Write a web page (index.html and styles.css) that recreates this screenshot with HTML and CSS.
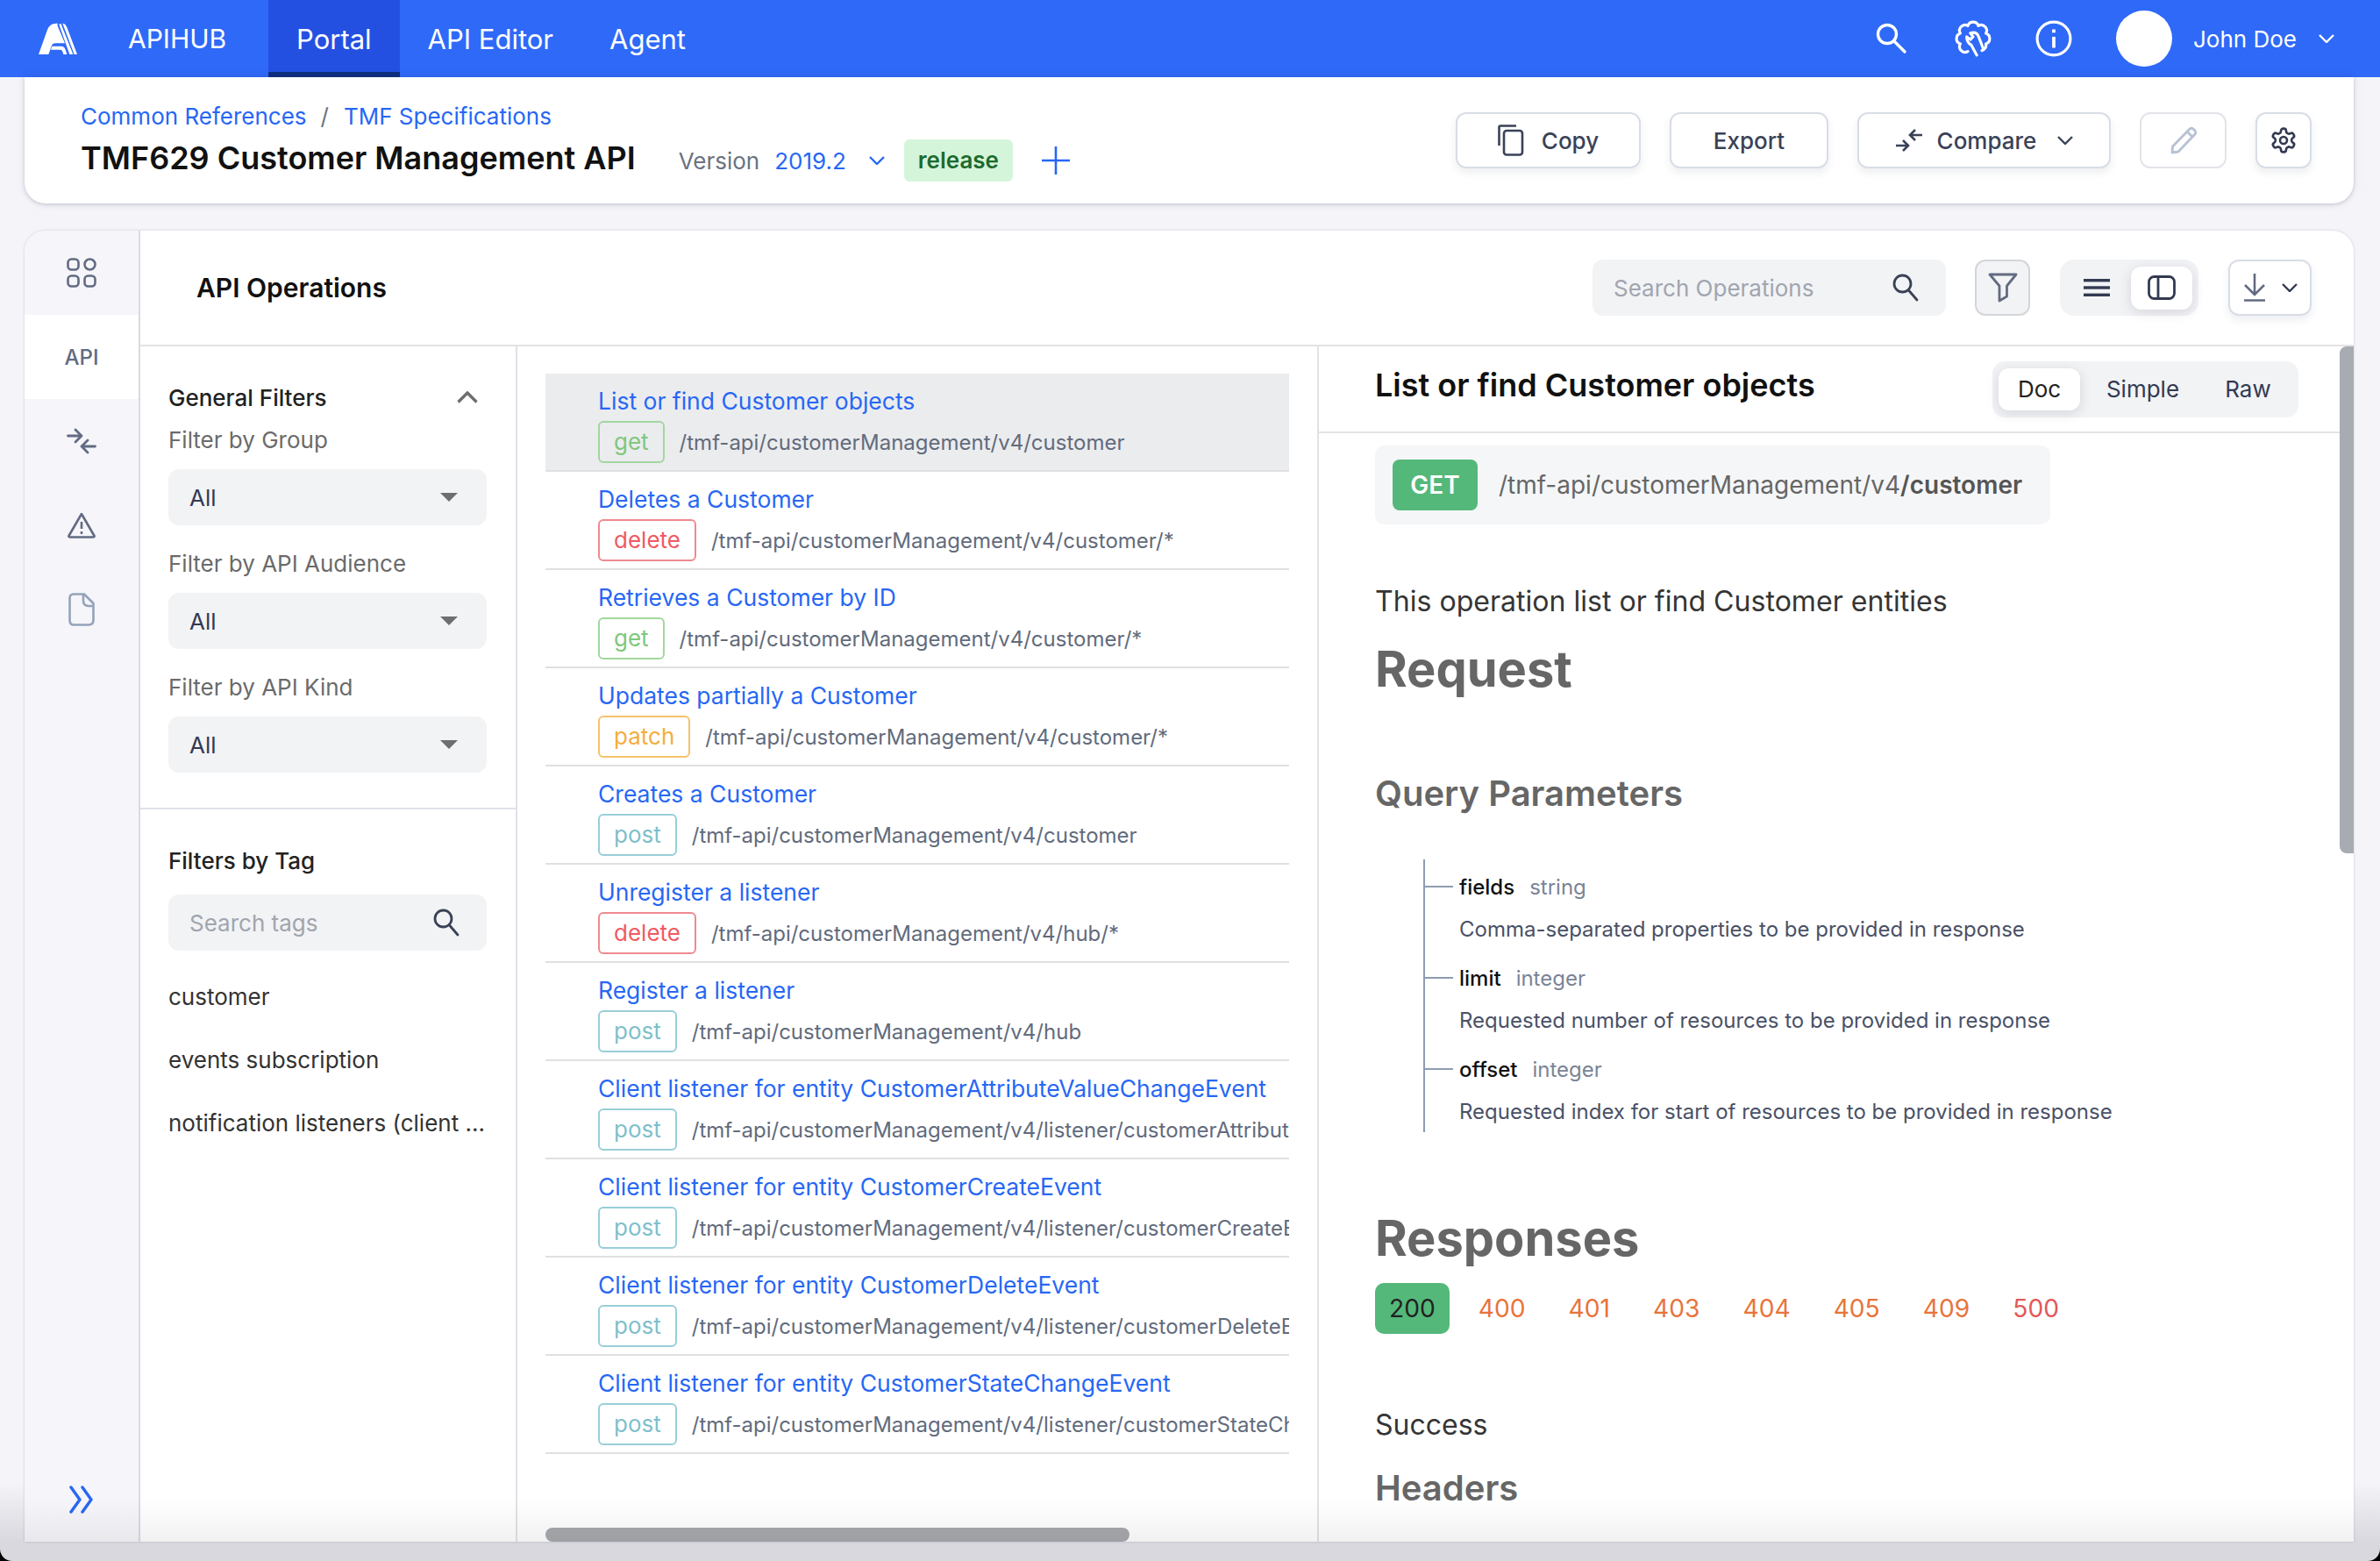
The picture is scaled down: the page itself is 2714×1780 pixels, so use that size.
FILE: index.html
```html
<!DOCTYPE html>
<html lang="en">
<head>
  <meta charset="UTF-8">
  <title>APIHUB Portal</title>
  <link rel="stylesheet" href="styles.css">
</head>
<body>
  <div class="window">
    <!-- Top navigation -->
    <header class="topnav">
      <svg class="logo" viewBox="0 0 132 108" fill="#fff">
        <path d="M0 108 L30 24 Q38 2 60 2 L66 2 L64 8 L90 70 L58 70 Q48 70 44 80 L34 108 Z"/>
        <path d="M46 80 H78 Q88 80 92 92 L97 108 H85 L82 98 Q80 92 74 92 H42 Z"/>
        <path d="M70 6 L76 2 L118 108 H106 Z"/>
        <path d="M82 2 Q92 2 98 18 L132 108 H122 Z"/>
      </svg>
      <span class="brand">APIHUB</span>
      <nav class="tabs">
        <a class="tab active">Portal</a>
        <a class="tab">API Editor</a>
        <a class="tab">Agent</a>
      </nav>
      <div class="nav-right">
        <svg class="nav-search" viewBox="0 0 36 36" fill="none" stroke="#fff" stroke-width="3.4" stroke-linecap="round"><circle cx="13" cy="13" r="10.5"/><path d="M21 21 L33 33"/></svg>
        <svg class="nav-tool" viewBox="0 0 40 40" fill="none" stroke="#fff" stroke-width="3" stroke-linecap="round" stroke-linejoin="round"><path d="M14.3 33.9 A6 6 0 0 1 6.1 25.7 A6 6 0 0 1 6.1 14.3 A6 6 0 0 1 14.3 6.1 A6 6 0 0 1 25.7 6.1 A6 6 0 0 1 33.9 14.3 A6 6 0 0 1 33.9 25.700 A6 6 0 0 1 29.500 33"/><path d="M24 38 L18 27 Q13 24 13 18 L17 21 L20 18 L17 14 Q24 12 26 18 L31 31"/></svg>
        <svg class="nav-info" viewBox="0 0 40 40" fill="none" stroke="#fff" stroke-width="3"><circle cx="20" cy="20" r="18"/><path d="M20 18 V30" stroke-width="3.6"/><path d="M20 10 V13.6" stroke-width="3.6"/></svg>
        <span class="avatar"></span>
        <span class="user">John Doe</span>
        <svg class="nav-chevron" viewBox="0 0 18 10" fill="none" stroke="#fff" stroke-width="2.4"><path d="M1 1 L9 9 L17 1"/></svg>
      </div>
    </header>

    <!-- Package header -->
    <section class="package">
      <div class="package-info">
        <div class="crumbs"><a>Common References</a><span class="sep">/</span><a>TMF Specifications</a></div>
        <div class="title-row">
          <h1>TMF629 Customer Management API</h1>
          <span class="version-label">Version</span>
          <span class="version">2019.2</span>
          <svg class="version-chevron" viewBox="0 0 18 10" fill="none" stroke="#2767f4" stroke-width="2.4"><path d="M1 1 L9 9 L17 1"/></svg>
          <span class="release">release</span>
          <svg class="plus" viewBox="0 0 34 34" fill="none" stroke="#2767f4" stroke-width="2.6"><path d="M17 1 V33 M1 17 H33"/></svg>
        </div>
      </div>
      <div class="actions">
        <button class="btn btn-copy">
          <svg width="30" height="36" viewBox="0 0 30 36" fill="none" stroke="#3a4257" stroke-width="2.6"><path d="M1.5 24 V3 Q1.5 1.5 3 1.5 H21"/><rect x="7" y="7" width="21" height="27.5" rx="3"/></svg>
          Copy
        </button>
        <button class="btn btn-export">Export</button>
        <button class="btn btn-compare">
          <svg width="32" height="28" viewBox="0 0 32 28" fill="none" stroke="#3a4257" stroke-width="2.6"><path d="M1 20 H14 M9 14 L15 20 L9 26"/><path d="M31 8 H18 M23 2 L17 8 L23 14"/></svg>
          Compare
          <svg class="btn-chevron" width="18" height="10" viewBox="0 0 18 10" fill="none" stroke="#3a4257" stroke-width="2.4"><path d="M1 1 L9 9 L17 1"/></svg>
        </button>
        <button class="btn btn-edit">
          <svg width="32" height="32" viewBox="0 0 32 32" fill="none" stroke="#b7c1d3" stroke-width="2.8" stroke-linejoin="round"><path d="M23 3 Q25 1.5 27 3 L29 5 Q30.500 7 29 9 L10 29 L3 30 L3.500 23 Z"/><path d="M20 6 L26 12"/></svg>
        </button>
        <button class="btn btn-settings">
          <svg width="32" height="32" viewBox="0 0 24 24" fill="none" stroke="#333a52" stroke-width="2"><path d="M12.22 2h-.44a2 2 0 0 0-2 2v.18a2 2 0 0 1-1 1.73l-.43.25a2 2 0 0 1-2 0l-.15-.08a2 2 0 0 0-2.73.73l-.22.38a2 2 0 0 0 .73 2.730l.15.1a2 2 0 0 1 1 1.72v.51a2 2 0 0 1-1 1.74l-.15.09a2 2 0 0 0-.73 2.73l.22.38a2 2 0 0 0 2.73.73l.15-.08a2 2 0 0 1 2 0l.43.25a2 2 0 0 1 1 1.73V20a2 2 0 0 0 2 2h.44a2 2 0 0 0 2-2v-.18a2 2 0 0 1 1-1.73l.43-.25a2 2 0 0 1 2 0l.15.08a2 2 0 0 0 2.73-.73l.22-.39a2 2 0 0 0-.73-2.73l-.15-.08a2 2 0 0 1-1-1.74v-.5a2 2 0 0 1 1-1.74l.15-.09a2 2 0 0 0 .73-2.73l-.22-.38a2 2 0 0 0-2.73-.73l-.15.08a2 2 0 0 1-2 0l-.43-.25a2 2 0 0 1-1-1.73V4a2 2 0 0 0-2-2z"/><circle cx="12" cy="12" r="3"/></svg>
        </button>
      </div>
    </section>

    <!-- Main panel -->
    <section class="panel">
      <aside class="sidebar">
        <div class="side-item">
          <svg width="34" height="34" viewBox="0 0 34 34" fill="none" stroke="#626b82" stroke-width="2.600"><rect x="1.500" y="1.500" width="12" height="12" rx="4"/><rect x="20.500" y="1.500" width="12" height="12" rx="6"/><rect x="1.500" y="20.500" width="12" height="12" rx="4"/><rect x="20.500" y="20.500" width="12" height="12" rx="4"/></svg>
        </div>
        <div class="side-item side-active">API</div>
        <div class="side-item">
          <svg width="34" height="30" viewBox="0 0 34 30" fill="none" stroke="#626b82" stroke-width="2.800" stroke-linecap="round" stroke-linejoin="round"><path d="M1.500 9 H17 M10 2 L17 9 L10 16"/><path d="M32.500 21 H17 M24 14 L17 21 L24 28"/></svg>
        </div>
        <div class="side-item">
          <svg width="32" height="30" viewBox="0 0 32 30" fill="none" stroke="#626b82" stroke-width="2.600" stroke-linejoin="round"><path d="M16 2 L30.500 27 Q31 28.500 29 28.500 H3 Q1 28.500 1.500 27 Z"/><path d="M16 11 V19 M16 22 V25"/></svg>
        </div>
        <div class="side-item">
          <svg width="30" height="38" viewBox="0 0 30 38" fill="none" stroke="#94a2ba" stroke-width="2.600" stroke-linejoin="round"><path d="M6 1.500 H18 L28.500 12 V31 Q28.500 36.500 23 36.500 H6 Q1.500 36.500 1.500 31 V6 Q1.500 1.500 6 1.500 Z"/><path d="M17 1.500 V9 Q17 15 23 15 H28.500"/></svg>
        </div>
        <div class="side-bottom">
          <svg width="30" height="32" viewBox="0 0 30 32" fill="none" stroke="#2767f4" stroke-width="3.400" stroke-linecap="round" stroke-linejoin="round"><path d="M3 2 L13 16 L3 30"/><path d="M16 2 L26 16 L16 30"/></svg>
        </div>
      </aside>

      <div class="content">
        <div class="toolbar">
          <h2 class="toolbar-title">API Operations</h2>
          <div class="search-box search-ops">
            <span class="placeholder">Search Operations</span>
            <svg width="30" height="32" viewBox="0 0 30 32" fill="none" stroke="#3a4257" stroke-width="2.800" stroke-linecap="round"><circle cx="11.500" cy="11.500" r="9.500"/><path d="M18.500 19 L28 30"/></svg>
          </div>
          <button class="btn btn-filter">
            <svg width="34" height="34" viewBox="0 0 34 34" fill="none" stroke="#626b82" stroke-width="2.800" stroke-linejoin="round"><path d="M2 2 H32 L21.500 15 V27 L13 32 V15 Z"/></svg>
          </button>
          <div class="view-toggle">
            <span class="view-opt">
              <svg width="30" height="20" viewBox="0 0 30 20" fill="#333a52"><rect y="0" width="30" height="3.400"/><rect y="8.300" width="30" height="3.400"/><rect y="16.600" width="30" height="3.400"/></svg>
            </span>
            <span class="view-opt view-active">
              <svg width="32" height="28" viewBox="0 0 32 28" fill="none" stroke="#333a52" stroke-width="2.800"><rect x="1.500" y="1.500" width="29" height="25" rx="6"/><path d="M12 1.500 V26.500"/></svg>
            </span>
          </div>
          <button class="btn btn-download">
            <svg width="26" height="32" viewBox="0 0 26 32" fill="none" stroke="#626b82" stroke-width="2.600"><path d="M13 0 V23 M2 13 L13 24 L24 13"/><path d="M1 30.500 H25"/></svg>
            <svg width="18" height="10" viewBox="0 0 18 10" fill="none" stroke="#333a52" stroke-width="2.400"><path d="M1 1 L9 9 L17 1"/></svg>
          </button>
        </div>

        <div class="columns">
          <!-- Filters -->
          <div class="filters">
            <div class="filters-general">
              <div class="filter-head">
                <span>General Filters</span>
                <svg width="24" height="14" viewBox="0 0 24 14" fill="none" stroke="#6e6e6e" stroke-width="3.400"><path d="M1.500 12.500 L12 2 L22.500 12.500"/></svg>
              </div>
              <div class="filter-label">Filter by Group</div>
              <div class="select">All<i class="caret"></i></div>
              <div class="filter-label">Filter by API Audience</div>
              <div class="select">All<i class="caret"></i></div>
              <div class="filter-label">Filter by API Kind</div>
              <div class="select">All<i class="caret"></i></div>
            </div>
            <div class="filters-tags">
              <div class="tags-title">Filters by Tag</div>
              <div class="search-box search-tags">
                <span class="placeholder">Search tags</span>
                <svg width="30" height="32" viewBox="0 0 30 32" fill="none" stroke="#3a4257" stroke-width="2.800" stroke-linecap="round"><circle cx="11.500" cy="11.500" r="9.500"/><path d="M18.500 19 L28 30"/></svg>
              </div>
              <div class="tag">customer</div>
              <div class="tag">events subscription</div>
              <div class="tag">notification listeners (client ...</div>
            </div>
          </div>

          <!-- Operations list -->
          <div class="ops">
            <div class="op selected">
              <div class="op-title">List or find Customer objects</div>
              <div class="op-line"><span class="method get">get</span><span class="op-path">/tmf-api/customerManagement/v4/customer</span></div>
            </div>
            <div class="op">
              <div class="op-title">Deletes a Customer</div>
              <div class="op-line"><span class="method delete">delete</span><span class="op-path">/tmf-api/customerManagement/v4/customer/*</span></div>
            </div>
            <div class="op">
              <div class="op-title">Retrieves a Customer by ID</div>
              <div class="op-line"><span class="method get">get</span><span class="op-path">/tmf-api/customerManagement/v4/customer/*</span></div>
            </div>
            <div class="op">
              <div class="op-title">Updates partially a Customer</div>
              <div class="op-line"><span class="method patch">patch</span><span class="op-path">/tmf-api/customerManagement/v4/customer/*</span></div>
            </div>
            <div class="op">
              <div class="op-title">Creates a Customer</div>
              <div class="op-line"><span class="method post">post</span><span class="op-path">/tmf-api/customerManagement/v4/customer</span></div>
            </div>
            <div class="op">
              <div class="op-title">Unregister a listener</div>
              <div class="op-line"><span class="method delete">delete</span><span class="op-path">/tmf-api/customerManagement/v4/hub/*</span></div>
            </div>
            <div class="op">
              <div class="op-title">Register a listener</div>
              <div class="op-line"><span class="method post">post</span><span class="op-path">/tmf-api/customerManagement/v4/hub</span></div>
            </div>
            <div class="op">
              <div class="op-title">Client listener for entity CustomerAttributeValueChangeEvent</div>
              <div class="op-line"><span class="method post">post</span><span class="op-path">/tmf-api/customerManagement/v4/listener/customerAttributeValueChangeEvent</span></div>
            </div>
            <div class="op">
              <div class="op-title">Client listener for entity CustomerCreateEvent</div>
              <div class="op-line"><span class="method post">post</span><span class="op-path">/tmf-api/customerManagement/v4/listener/customerCreateEvent</span></div>
            </div>
            <div class="op">
              <div class="op-title">Client listener for entity CustomerDeleteEvent</div>
              <div class="op-line"><span class="method post">post</span><span class="op-path">/tmf-api/customerManagement/v4/listener/customerDeleteEvent</span></div>
            </div>
            <div class="op">
              <div class="op-title">Client listener for entity CustomerStateChangeEvent</div>
              <div class="op-line"><span class="method post">post</span><span class="op-path">/tmf-api/customerManagement/v4/listener/customerStateChangeEvent</span></div>
            </div>
            <div class="hscroll"></div>
          </div>

          <!-- Operation details -->
          <div class="detail">
            <div class="detail-head">
              <h2>List or find Customer objects</h2>
              <div class="mode-toggle">
                <span class="mode mode-active">Doc</span>
                <span class="mode mode-simple">Simple</span>
                <span class="mode mode-raw">Raw</span>
              </div>
            </div>
            <div class="detail-body">
              <div class="endpoint">
                <span class="endpoint-method">GET</span>
                <span class="endpoint-path">/tmf-api/customerManagement/v4<b>/customer</b></span>
              </div>
              <p class="desc">This operation list or find Customer entities</p>
              <h3 class="h-large">Request</h3>
              <h4 class="h-query">Query Parameters</h4>
              <div class="params">
                <div class="param">
                  <div class="param-name"><i class="tick"></i><span>fields</span><em>string</em></div>
                  <div class="param-desc">Comma-separated properties to be provided in response</div>
                </div>
                <div class="param">
                  <div class="param-name"><i class="tick"></i><span>limit</span><em>integer</em></div>
                  <div class="param-desc">Requested number of resources to be provided in response</div>
                </div>
                <div class="param">
                  <div class="param-name"><i class="tick"></i><span>offset</span><em>integer</em></div>
                  <div class="param-desc">Requested index for start of resources to be provided in response</div>
                </div>
              </div>
              <h3 class="h-large h-responses">Responses</h3>
              <div class="codes">
                <span class="code code-active">200</span>
                <span class="code">400</span>
                <span class="code">401</span>
                <span class="code">403</span>
                <span class="code">404</span>
                <span class="code">405</span>
                <span class="code">409</span>
                <span class="code code-500">500</span>
              </div>
              <p class="success">Success</p>
              <h4 class="h-headers">Headers</h4>
            </div>
            <div class="vscroll"></div>
          </div>
        </div>
      </div>
      <div class="panel-fade"></div>
    </section>
  </div>
</body>
</html>
```

FILE: styles.css
```css
* {
  box-sizing: border-box;
}

body {
  margin: 0;
  background-color: #000;
  font-family: 'Inter', 'Liberation Sans', sans-serif;
  color: #333a52;
}

h1, h2, h3, h4, p {
  margin: 0;
}

.window {
  width: 2714px;
  height: 1780px;
  display: flex;
  flex-direction: column;
  overflow: hidden;
  border-radius: 0 0 14px 14px;
  background: linear-gradient(to bottom, #f4f4f9 0, #f4f4f9 1690px, #d8d8de 1758px);
}

/* Top navigation */
.topnav {
  height: 88px;
  flex: none;
  display: flex;
  align-items: center;
  padding-left: 44px;
  background-color: #2f69f8;
  color: #fff;
  font-size: 30px;
}

.logo {
  width: 44px;
  height: 36px;
}

.brand {
  margin-left: 58px;
  width: 160px;
}

.tabs {
  display: flex;
  align-self: stretch;
  font-size: 31px;
}

.tab {
  display: flex;
  align-items: center;
  padding: 0 32px;
  border-bottom: 6px solid transparent;
  border-top: 6px solid transparent;
}

.tab.active {
  background-color: #2450e2;
  border-top-color: #2450e2;
  border-bottom-color: #0f2d7e;
}

.nav-right {
  margin-left: auto;
  display: flex;
  align-items: center;
  padding-right: 52px;
}

.nav-search {
  width: 36px;
  height: 36px;
}

.nav-tool {
  width: 42px;
  height: 42px;
  margin-left: 54px;
}

.nav-info {
  width: 42px;
  height: 42px;
  margin-left: 50px;
}

.avatar {
  width: 64px;
  height: 64px;
  margin-left: 50px;
  border-radius: 50%;
  background-color: #fff;
}

.user {
  margin-left: 24px;
  font-size: 26px;
}

.nav-chevron {
  width: 18px;
  height: 10px;
  margin-left: 25px;
}

/* Package header */
.package {
  height: 144px;
  flex: none;
  margin: 0 30px 0 28px;
  padding: 0 48px 0 64px;
  display: flex;
  justify-content: space-between;
  background-color: #fff;
  border-radius: 0 0 24px 24px;
  box-shadow: 0 1px 4px rgba(60, 65, 90, 0.25), 0 0 14px rgba(60, 65, 90, 0.06);
}

.package-info {
  padding-top: 30px;
}

.crumbs {
  height: 32px;
  line-height: 30px;
  font-size: 26px;
  color: #2767f4;
}

.crumbs .sep {
  margin: 0 17px 0 16px;
  color: #6b7280;
}

.title-row {
  display: flex;
  align-items: center;
  height: 48px;
  margin-top: 6px;
}

.title-row h1 {
  font-size: 36px;
  font-weight: 600;
  color: #111;
  margin-right: 49px;
}

.version-label {
  font-size: 26px;
  color: #6b7280;
  padding-top: 6px;
}

.version {
  margin-left: 17px;
  font-size: 26px;
  color: #2767f4;
  padding-top: 6px;
}

.version-chevron {
  width: 18px;
  height: 10px;
  margin: 6px 0 0 26px;
}

.release {
  margin-left: 22px;
  height: 48px;
  padding: 0 16px;
  line-height: 48px;
  font-size: 26px;
  font-weight: 600;
  color: #1c6a2e;
  background-color: #d5f5da;
  border-radius: 6px;
  margin-top: 6px;
}

.plus {
  width: 34px;
  height: 34px;
  margin: 6px 0 0 32px;
}

.actions {
  display: flex;
  gap: 33px;
  padding-top: 40px;
}

.btn {
  height: 64px;
  display: flex;
  align-items: center;
  justify-content: center;
  font-family: inherit;
  font-size: 26px;
  font-weight: 500;
  color: #3a4257;
  background-color: #fff;
  border: 2px solid #d8dde6;
  border-radius: 12px;
  box-shadow: 0 5px 10px rgba(60, 65, 90, 0.09);
}

.btn-copy {
  width: 211px;
  gap: 20px;
}

.btn-export {
  width: 181px;
}

.btn-compare {
  width: 289px;
  gap: 16px;
}

.btn-chevron {
  margin-left: 8px;
}

.btn-edit {
  width: 99px;
  border-color: #e2e4e8;
  box-shadow: none;
}

.btn-settings {
  width: 64px;
}

/* Main panel */
.panel {
  position: relative;
  flex: none;
  height: 1495px;
  margin: 31px 30px 0 28px;
  display: flex;
  overflow: hidden;
  background-color: #fff;
  border-radius: 24px 24px 0 0;
  box-shadow: 0 0 3px rgba(60, 65, 90, 0.22);
}

.panel-fade {
  position: absolute;
  left: 0;
  right: 0;
  bottom: 0;
  height: 50px;
  background: linear-gradient(to bottom, rgba(0, 0, 0, 0), rgba(0, 0, 0, 0.055));
  pointer-events: none;
}

.sidebar {
  position: relative;
  width: 132px;
  flex: none;
  display: flex;
  flex-direction: column;
  background-color: #f5f5fa;
  border-right: 2px solid #d8dbe3;
}

.side-item {
  height: 96px;
  display: flex;
  align-items: center;
  justify-content: center;
  font-size: 24px;
  font-weight: 500;
  color: #626b82;
}

.side-active {
  background-color: #fff;
}

.side-bottom {
  margin-top: auto;
  height: 96px;
  display: flex;
  align-items: center;
  justify-content: center;
}

.content {
  flex: 1;
  min-width: 0;
  display: flex;
  flex-direction: column;
}

.toolbar {
  height: 132px;
  flex: none;
  display: flex;
  align-items: flex-start;
  padding: 33px 48px 0 64px;
  border-bottom: 2px solid #e3e3e5;
}

.toolbar-title {
  font-size: 30px;
  font-weight: 600;
  line-height: 64px;
  color: #111;
  margin-right: auto;
}

.search-box {
  height: 64px;
  display: flex;
  align-items: center;
  justify-content: space-between;
  background-color: #f2f3f5;
  border-radius: 12px;
  font-size: 26px;
}

.placeholder {
  color: #a0a5af;
}

.search-ops {
  width: 403px;
  padding: 0 31px 0 24px;
}

.btn-filter {
  width: 63px;
  margin-left: 33px;
  background-color: #f2f3f5;
  border-color: #d4d5d9;
  box-shadow: none;
}

.view-toggle {
  width: 158px;
  height: 64px;
  margin-left: 34px;
  display: flex;
  align-items: center;
  justify-content: space-between;
  padding: 0 7px 0 8px;
  background-color: #f2f3f5;
  border-radius: 16px;
}

.view-opt {
  width: 68px;
  height: 49px;
  display: flex;
  align-items: center;
  justify-content: center;
}

.view-active {
  width: 70px;
  background-color: #fff;
  border-radius: 12px;
  box-shadow: 0 3px 14px rgba(60, 65, 90, 0.16);
}

.btn-download {
  width: 95px;
  margin-left: 34px;
  gap: 18px;
}

.columns {
  flex: 1;
  min-height: 0;
  display: flex;
}

/* Filters */
.filters {
  width: 430px;
  flex: none;
  border-right: 2px solid #dfe2e7;
}

.filters-general {
  padding: 42px 33px 40px 32px;
  border-bottom: 2px solid #dfe2e7;
}

.filter-head {
  height: 32px;
  margin-bottom: 17px;
  display: flex;
  align-items: center;
  justify-content: space-between;
  padding-right: 10px;
  font-size: 26px;
  font-weight: 500;
  color: #222;
}

.filter-label {
  height: 32px;
  line-height: 32px;
  margin-bottom: 17px;
  font-size: 26px;
  color: #6b6b6b;
}

.select {
  height: 64px;
  margin-bottom: 28px;
  padding: 0 33px 0 24px;
  display: flex;
  align-items: center;
  justify-content: space-between;
  background-color: #f2f3f5;
  border-radius: 12px;
  font-size: 26px;
}

.select:last-child {
  margin-bottom: 0;
}

.caret {
  width: 0;
  height: 0;
  border-left: 10px solid transparent;
  border-right: 10px solid transparent;
  border-top: 10px solid #6e6e6e;
}

.filters-tags {
  padding: 44px 33px 0 32px;
}

.tags-title {
  height: 32px;
  line-height: 30px;
  margin-bottom: 21px;
  font-size: 26px;
  font-weight: 500;
  color: #222;
}

.search-tags {
  margin-bottom: 17px;
  padding: 0 31px 0 24px;
}

.tag {
  height: 72px;
  line-height: 72px;
  font-size: 26px;
  color: #333;
  white-space: nowrap;
}

/* Operations list */
.ops {
  position: relative;
  width: 914px;
  flex: none;
  padding: 31px 32px 0 32px;
  overflow: hidden;
  border-right: 2px solid #dfe2e7;
}

.op {
  height: 112px;
  padding: 0 0 0 60px;
  overflow: hidden;
  white-space: nowrap;
  border-bottom: 2px solid #e0e0e2;
}

.op.selected {
  background-color: #ebecee;
}

.op-title {
  height: 32px;
  margin-top: 15px;
  line-height: 32px;
  font-size: 26.5px;
  color: #2767f4;
}

.op-line {
  display: flex;
  align-items: center;
  margin-top: 7px;
}

.method {
  height: 48px;
  padding: 0 16px;
  margin-right: 17px;
  line-height: 44px;
  flex: none;
  font-size: 26px;
  border: 2px solid;
  border-radius: 6px;
}

.get {
  color: #7fc77b;
  border-color: #a2d79e;
}

.delete {
  color: #ef5a62;
  border-color: #ef8a8f;
}

.patch {
  color: #f4ae3c;
  border-color: #f6c26b;
}

.post {
  color: #7fbfcc;
  border-color: #98ced9;
}

.op-path {
  font-size: 24px;
  color: #626b7c;
}

.hscroll {
  position: absolute;
  left: 32px;
  bottom: 0;
  width: 666px;
  height: 16px;
  background-color: #a8a9ad;
  border-radius: 8px;
}

/* Operation details */
.detail {
  position: relative;
  flex: 1;
  min-width: 0;
  overflow: hidden;
}

.detail-head {
  height: 99px;
  padding: 0 63px 0 64px;
  display: flex;
  align-items: center;
  justify-content: space-between;
  border-bottom: 2px solid #e3e3e5;
}

.detail-head h2 {
  padding-bottom: 10px;
  font-size: 36px;
  font-weight: 600;
  color: #111;
}

.mode-toggle {
  width: 349px;
  height: 64px;
  padding: 0 7px;
  display: flex;
  align-items: center;
  background-color: #f2f3f5;
  border-radius: 14px;
  font-size: 26px;
}

.mode {
  height: 48px;
  line-height: 48px;
  text-align: center;
}

.mode-simple {
  width: 143px;
}

.mode-raw {
  width: 97px;
}

.mode-active {
  width: 93px;
  background-color: #fff;
  border-radius: 12px;
  box-shadow: 0 3px 14px rgba(60, 65, 90, 0.16);
  color: #222;
}

.detail-body {
  padding: 14px 64px 0;
}

.endpoint {
  width: 770px;
  height: 90px;
  padding-left: 20px;
  display: flex;
  align-items: center;
  gap: 24px;
  background-color: #f5f6f8;
  border-radius: 10px;
}

.endpoint-method {
  width: 97px;
  height: 58px;
  line-height: 58px;
  text-align: center;
  font-size: 28px;
  font-weight: 600;
  color: #fff;
  background-color: #54b87a;
  border-radius: 8px;
}

.endpoint-path {
  font-size: 28px;
  color: #666;
}

.endpoint-path b {
  font-weight: 600;
  color: #555;
}

.desc {
  margin-top: 66px;
  height: 44px;
  line-height: 44px;
  font-size: 32.1px;
  color: #353535;
}

.h-large {
  margin-top: 20px;
  height: 72px;
  line-height: 70px;
  font-size: 56px;
  font-weight: 700;
  color: #666;
}

.h-query {
  margin-top: 80px;
  height: 52px;
  line-height: 50px;
  font-size: 40px;
  font-weight: 600;
  color: #666;
}

.params {
  margin: 48px 0 0 55px;
  height: 311px;
  padding-top: 11px;
  border-left: 2px solid #8e9cb2;
  display: flex;
  flex-direction: column;
  gap: 15px;
}

.param {
  height: 89px;
}

.param-name {
  height: 40px;
  display: flex;
  align-items: center;
  font-size: 24px;
  font-weight: 500;
  color: #111;
}

.tick {
  width: 32px;
  height: 2px;
  margin-right: 7px;
  background-color: #8e9cb2;
}

.param-name em {
  margin-left: 17px;
  font-style: normal;
  font-weight: 400;
  color: #7a8496;
}

.param-desc {
  margin-top: 9px;
  padding-left: 39px;
  height: 40px;
  line-height: 40px;
  font-size: 24px;
  color: #4a5166;
}

.h-responses {
  margin-top: 86px;
}

.codes {
  margin-top: 14px;
  display: flex;
  gap: 17px;
}

.code {
  height: 58px;
  padding: 0 16px;
  line-height: 58px;
  font-size: 28.2px;
  color: #e8743b;
  border-radius: 10px;
}

.code-active {
  background-color: #54b87a;
  color: #222;
}

.code-500 {
  color: #e05a5a;
}

.success {
  margin-top: 84px;
  height: 40px;
  line-height: 40px;
  font-size: 32px;
  color: #353535;
}

.h-headers {
  margin-top: 26px;
  height: 52px;
  line-height: 52px;
  font-size: 40px;
  font-weight: 600;
  color: #666;
}

.vscroll {
  position: absolute;
  top: 0;
  right: 0;
  width: 16px;
  height: 578px;
  background-color: #a8acb2;
  border-radius: 8px 0 0 8px;
}
```
